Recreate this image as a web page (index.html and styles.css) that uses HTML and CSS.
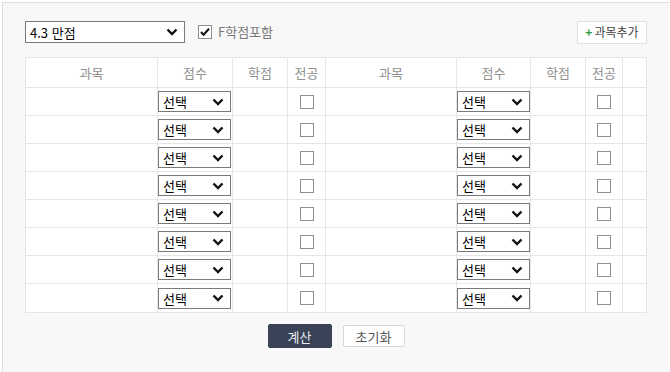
FILE: index.html
```html
<!DOCTYPE html>
<html lang="ko">
<head>
    <meta charset="UTF-8">
    <title>학점계산기</title>
    <link rel="stylesheet" href="styles.css">
</head>
<body>
    <div class="calc-box">
        <div class="toolbar">
            <select class="scale-select">
                <option>4.3 만점</option>
                <option>4.5 만점</option>
                <option>4.0 만점</option>
            </select>
            <label class="f-check"><input type="checkbox" class="chk" checked> F학점포함</label>
            <button class="add-btn"><span class="plus">+</span>과목추가</button>
        </div>

        <table class="grade-table">
            <colgroup>
                <col style="width:132px"><col style="width:75px"><col style="width:55px"><col style="width:38px">
                <col style="width:131px"><col style="width:74px"><col style="width:55px"><col style="width:37px">
                <col>
            </colgroup>
            <thead>
                <tr>
                    <th>과목</th><th>점수</th><th>학점</th><th>전공</th>
                    <th>과목</th><th>점수</th><th>학점</th><th>전공</th><th></th>
                </tr>
            </thead>
            <tbody id="rows"></tbody>
        </table>

        <div class="actions">
            <button class="btn btn-calc">계산</button>
            <button class="btn btn-reset">초기화</button>
        </div>
    </div>

    <script>
        // 과목 입력줄 8개 생성 (한 줄에 두 과목)
        var grades = ['선택', 'A+', 'A0', 'A-', 'B+', 'B0', 'B-', 'C+', 'C0', 'C-', 'D+', 'D0', 'D-', 'F'];
        var opts = grades.map(function (g) { return '<option>' + g + '</option>'; }).join('');
        var half = '<td></td>' +
            '<td class="score"><select class="score-select">' + opts + '</select></td>' +
            '<td></td>' +
            '<td><input type="checkbox" class="chk"></td>';
        var html = '';
        for (var i = 0; i < 8; i++) {
            html += '<tr' + (i == 7 ? ' class="last"' : '') + '>' + half + half + '<td></td></tr>';
        }
        document.getElementById('rows').innerHTML = html;
    </script>
</body>
</html>
```

FILE: styles.css
```css
body {
    margin: 0;
    font-family: "Noto Sans CJK KR", "Noto Sans", sans-serif;
    font-size: 13px;
    background: #fff;
}
.calc-box {
    margin: 2px 0 0 2px;
    border: 1px solid #dedede;
    border-right: 0;
    background: #f8f8f8;
    padding: 18px 23px 30px 22px;
}
.toolbar {
    display: flex;
    align-items: center;
    height: 22px;
}
.scale-select,
.score-select {
    appearance: none;
    -webkit-appearance: none;
    border: 1px solid #7a7a7a;
    border-radius: 0;
    background: #fff url("data:image/svg+xml,%3Csvg xmlns='http://www.w3.org/2000/svg' viewBox='0 0 12 8'%3E%3Cpath d='M1.5 1.5L6 6l4.5-4.5' fill='none' stroke='%23111' stroke-width='2.4'/%3E%3C/svg%3E") right 6px center / 12px 8px no-repeat;
    color: #000;
    font-family: inherit;
    font-size: 13px;
    padding: 0 20px 0 4px;
}
.scale-select {
    width: 160px;
    height: 22px;
}
.f-check {
    display: flex;
    align-items: center;
    margin-left: 13px;
    color: #777;
    line-height: 16px;
}
.f-check .chk {
    margin-right: 6px;
}
.chk {
    appearance: none;
    -webkit-appearance: none;
    width: 14px;
    height: 14px;
    margin: 0;
    border: 1px solid #8f8f8f;
    background: #fff;
    vertical-align: middle;
}
.chk:checked {
    background: #fff url("data:image/svg+xml,%3Csvg xmlns='http://www.w3.org/2000/svg' viewBox='0 0 12 12'%3E%3Cpath d='M2 6l2.6 2.7L10 2.8' fill='none' stroke='%23111' stroke-width='2'/%3E%3C/svg%3E") center / 12px 12px no-repeat;
}
.add-btn {
    margin-left: auto;
    height: 23px;
    width: 70px;
    padding: 0;
    border: 1px solid #dedede;
    background: #fff;
    color: #444;
    font-family: inherit;
    font-size: 12px;
    line-height: 20px;
}
.add-btn .plus {
    color: #2a9a3a;
    font-weight: bold;
    margin-right: 2px;
}
.grade-table {
    width: 622px;
    margin-top: 14px;
    border-collapse: collapse;
    table-layout: fixed;
    background: #fff;
}
.grade-table th,
.grade-table td {
    border: 1px solid #e6e6e6;
    padding: 0;
    text-align: center;
    vertical-align: middle;
}
.grade-table th {
    height: 29px;
    color: #909090;
    font-weight: normal;
    font-size: 13px;
}
.grade-table td {
    height: 27px;
    line-height: 0;
}
.grade-table tr.last td {
    height: 28px;
}
.grade-table td.score {
    text-align: left;
}
.score-select {
    width: 73px;
    height: 21px;
}
.actions {
    display: flex;
    justify-content: center;
    align-items: center;
    gap: 11px;
    margin-top: 11px;
}
.btn {
    font-family: inherit;
    font-size: 13px;
    padding: 0;
    border-radius: 2px;
}
.btn-calc {
    width: 64px;
    height: 24px;
    background: #394257;
    border: 1px solid #394257;
    color: #e8eaf0;
}
.btn-reset {
    width: 62px;
    height: 22px;
    background: #fff;
    border: 1px solid #d6d6d6;
    color: #555;
}
```
